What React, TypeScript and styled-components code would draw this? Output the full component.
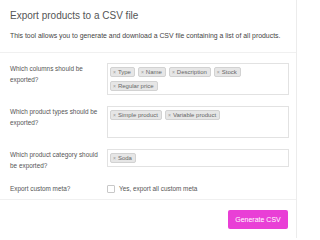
import React from "react";
import styled, { createGlobalStyle } from "styled-components";

const Global = createGlobalStyle`
  html, body { margin: 0; padding: 0; background: #fff; }
  body { font-family: "Liberation Sans", Arial, sans-serif; -webkit-font-smoothing: antialiased; }
`;

const Card = styled.div`
  width: 297px;
  height: 238px;
  box-sizing: border-box;
  border-right: 1px solid #ececec;
  background: #fff;
  display: flex;
  flex-direction: column;
`;

const Header = styled.div`
  padding: 9px 10px 0 10px;
  height: 53px;
  box-sizing: border-box;
  border-bottom: 1px solid #f0f0f0;
`;

const Title = styled.h1`
  margin: 0;
  font-size: 10px;
  line-height: 14px;
  font-weight: 400;
  color: #555;
`;

const Description = styled.p`
  margin: 9px 0 0 0;
  font-size: 6.9px;
  line-height: 8px;
  color: #444;
  white-space: nowrap;
`;

const Form = styled.div`
  padding: 10px 8px 0 10px;
  height: 147px;
  box-sizing: border-box;
  display: flex;
  flex-direction: column;
  gap: 11px;
  border-bottom: 1px solid #f0f0f0;
`;

const Row = styled.div`
  display: grid;
  grid-template-columns: 97px 182px;
  align-items: start;
`;

const Label = styled.div<{ $center?: boolean }>`
  font-size: 6.4px;
  line-height: 11px;
  color: #555;
  width: 88px;
  ${(p) => (p.$center ? "align-self: center;" : "")}
`;

const Select = styled.div<{ $minHeight?: number }>`
  box-sizing: border-box;
  border: 1px solid #e2e2e2;
  background: #fff;
  padding: 3px 2px;
  min-height: ${(p) => p.$minHeight ?? 18}px;
  display: flex;
  flex-wrap: wrap;
  align-content: flex-start;
  gap: 4px 3px;
`;

const Tag = styled.span`
  display: inline-flex;
  align-items: center;
  height: 10px;
  box-sizing: border-box;
  padding: 0 3px 0 2px;
  background: #e6e6e6;
  border: 1px solid #d2d2d2;
  border-radius: 2px;
  font-size: 6px;
  color: #666;
  white-space: nowrap;
`;

const Remove = styled.span`
  font-size: 5px;
  color: #999;
  margin-right: 2px;
`;

const CheckRow = styled.label`
  display: flex;
  align-items: center;
  gap: 4px;
  height: 13px;
  font-size: 6.4px;
  color: #555;
`;

const Box = styled.span`
  width: 6px;
  height: 6px;
  border: 1px solid #c8c8c8;
  border-radius: 1px;
  background: #fff;
`;

const Footer = styled.div`
  display: flex;
  justify-content: flex-end;
  padding: 10px 8px 0 0;
`;

const Button = styled.button`
  width: 60px;
  height: 19px;
  border: none;
  border-radius: 2px;
  background: #e93fd6;
  color: #fff;
  font-family: inherit;
  font-size: 7px;
  padding: 0;
  cursor: pointer;
`;

const TagItem = ({ children }: { children: React.ReactNode }) => (
  <Tag>
    <Remove>×</Remove>
    {children}
  </Tag>
);

export default function App() {
  return (
    <>
      <Global />
      <Card>
        <Header>
          <Title>Export products to a CSV file</Title>
          <Description>
            This tool allows you to generate and download a CSV file containing a list of all products.
          </Description>
        </Header>
        <Form>
          <Row>
            <Label>Which columns should be exported?</Label>
            <Select $minHeight={32}>
              <TagItem>Type</TagItem>
              <TagItem>Name</TagItem>
              <TagItem>Description</TagItem>
              <TagItem>Stock</TagItem>
              <TagItem>Regular price</TagItem>
            </Select>
          </Row>
          <Row>
            <Label>Which product types should be exported?</Label>
            <Select $minHeight={32}>
              <TagItem>Simple product</TagItem>
              <TagItem>Variable product</TagItem>
            </Select>
          </Row>
          <Row>
            <Label>Which product category should be exported?</Label>
            <Select $minHeight={18}>
              <TagItem>Soda</TagItem>
            </Select>
          </Row>
          <Row>
            <Label $center>Export custom meta?</Label>
            <CheckRow>
              <Box />
              Yes, export all custom meta
            </CheckRow>
          </Row>
        </Form>
        <Footer>
          <Button>Generate CSV</Button>
        </Footer>
      </Card>
    </>
  );
}
